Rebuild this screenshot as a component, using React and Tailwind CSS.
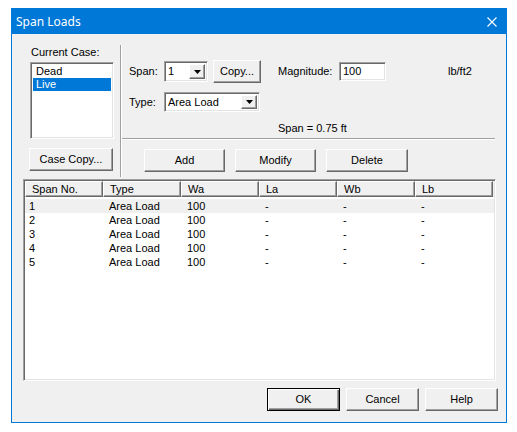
import React from 'react'

const raised =
  'flex items-center justify-center bg-[#f0f0f0] border border-t-white border-l-white border-r-[#696969] border-b-[#696969] shadow-[inset_-1px_-1px_0_#a0a0a0]'
const sunken =
  'bg-white border border-t-[#a0a0a0] border-l-[#a0a0a0] border-r-white border-b-white shadow-[inset_1px_1px_0_#696969,inset_-1px_-1px_0_#e3e3e3]'

function Btn({ children, className = '' }) {
  return <div className={`${raised} ${className}`}>{children}</div>
}

function Combo({ value, className = '' }) {
  return (
    <div className={`${sunken} flex items-stretch p-[2px] ${className}`}>
      <span className="flex-1 pl-[1px] flex items-center">{value}</span>
      <div className={`${raised} w-[16px]`}>
        <svg width="7" height="4" viewBox="0 0 7 4">
          <path d="M0 0h7L3.5 4z" fill="#000" />
        </svg>
      </div>
    </div>
  )
}

const columns = ['Span No.', 'Type', 'Wa', 'La', 'Wb', 'Lb']
const rows = [1, 2, 3, 4, 5]

export default function App() {
  return (
    <div className="w-[517px] h-[432px] bg-white pt-[8px] pl-[11px] font-['Liberation_Sans',Arial,sans-serif] text-[11px] leading-[13px] text-black">
      <div className="w-[496px] h-[415px] border border-[#0078d7] bg-[#f0f0f0] flex flex-col">
        {/* title bar */}
        <div className="h-[25px] shrink-0 bg-[#0078d7] flex items-center pl-[4px] pr-[9px] text-white text-[12px] font-['Noto_Sans',sans-serif]">
          <span>Span Loads</span>
          <svg className="ml-auto" width="10" height="10" viewBox="0 0 10 10">
            <path d="M0.5 0.5l9 9M9.5 0.5l-9 9" stroke="#fff" strokeWidth="1.1" />
          </svg>
        </div>

        {/* top controls */}
        <div className="flex">
          <div className="w-[108px] pl-[18px] pt-[12px] flex flex-col">
            <span className="h-[13px] ml-[1px]">Current Case:</span>
            <div className={`${sunken} mt-[3px] w-[84px] h-[77px] p-[2px]`}>
              <div className="h-[13px] pl-[3px]">Dead</div>
              <div className="h-[13px] pl-[3px] bg-[#0078d7] text-white">Live</div>
            </div>
            <Btn className="mt-[9px] -ml-[1px] w-[84px] h-[23px]">Case Copy...</Btn>
          </div>

          <div className="mt-[11px] h-[132px] w-[2px] border-l border-l-[#a0a0a0] border-r border-r-white" />

          <div className="flex flex-col pt-[26px]">
            <div className="h-[23px] flex items-center pl-[7px]">
              <span className="w-[35px]">Span:</span>
              <Combo value="1" className="w-[44px] h-[21px]" />
              <Btn className="ml-[5px] w-[48px] h-[23px]">Copy...</Btn>
              <span className="ml-[17px] w-[61px]">Magnitude:</span>
              <div className={`${sunken} w-[47px] h-[19px] pl-[3px] flex items-center`}>100</div>
              <span className="ml-[62px]">lb/ft2</span>
            </div>
            <div className="mt-[9px] h-[20px] flex items-center pl-[7px]">
              <span className="w-[35px]">Type:</span>
              <Combo value="Area Load" className="w-[96px] h-[20px]" />
            </div>
            <div className="mt-[10px] h-[13px] pl-[156px]">Span = 0.75 ft</div>
            <div className="mt-[3px] w-[373px] h-[2px] border-t border-t-[#a0a0a0] border-b border-b-white" />
            <div className="mt-[9px] pl-[22px] flex gap-[10px]">
              <Btn className="w-[81px] h-[23px]">Add</Btn>
              <Btn className="w-[81px] h-[23px]">Modify</Btn>
              <Btn className="w-[82px] h-[23px]">Delete</Btn>
            </div>
          </div>
        </div>

        {/* list view */}
        <div className={`${sunken} mt-[2px] ml-[11px] w-[473px] h-[202px] p-[1px] flex flex-col`}>
          <div className="flex h-[16px] bg-[#f0f0f0]">
            {columns.map((c) => (
              <div
                key={c}
                className="w-[78px] h-[16px] pl-[6px] flex items-center border border-t-white border-l-white border-r-[#696969] border-b-[#696969] shadow-[inset_-1px_-1px_0_#a0a0a0]"
              >
                {c}
              </div>
            ))}
          </div>
          <div className="mt-[2px] flex flex-col">
            {rows.map((r) => (
              <div key={r} className={`flex h-[14px] items-center ${r === 1 ? 'bg-[#f0f0f0]' : ''}`}>
                <span className="w-[78px] pl-[4px]">{r}</span>
                <span className="w-[78px] pl-[6px]">Area Load</span>
                <span className="w-[78px] pl-[6px]">100</span>
                <span className="w-[78px] pl-[6px]">-</span>
                <span className="w-[78px] pl-[6px]">-</span>
                <span className="w-[78px] pl-[6px]">-</span>
              </div>
            ))}
          </div>
        </div>

        {/* bottom buttons */}
        <div className="mt-[7px] flex justify-end pr-[8px] gap-[6px]">
          <div className="w-[73px] h-[23px] flex items-center justify-center bg-[#f0f0f0] border border-black shadow-[inset_1px_1px_0_#fff,inset_-1px_-1px_0_#696969,inset_-2px_-2px_0_#a0a0a0]">
            OK
          </div>
          <Btn className="w-[73px] h-[23px]">Cancel</Btn>
          <Btn className="w-[73px] h-[23px]">Help</Btn>
        </div>
      </div>
    </div>
  )
}
